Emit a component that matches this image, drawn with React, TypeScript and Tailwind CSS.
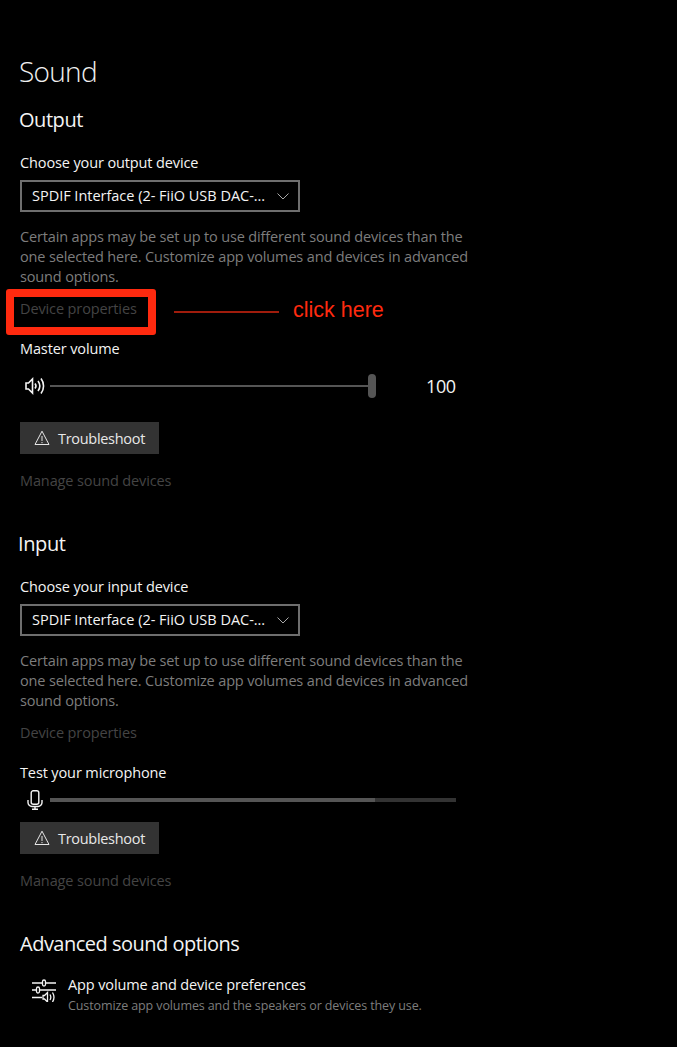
const font = { fontFamily: '"Open Sans", sans-serif' };

function Warning() {
  return (
    <svg width="16" height="16" viewBox="0 0 16 16" fill="none" stroke="#e6e6e6" strokeWidth="1">
      <path d="M8 1.200 15 14.500H1L8 1.200Z" />
      <path d="M8 6v5M8 12v1.200" />
    </svg>
  );
}

function Troubleshoot() {
  return (
    <button className="flex h-8 w-[139px] items-center bg-[#333333] pl-[14px] text-[14.5px] tracking-[-0.3px] text-[#e8e8e8]">
      <Warning />
      <span className="ml-2 pt-[2px]">Troubleshoot</span>
    </button>
  );
}

function DeviceSelect() {
  return (
    <div className="mt-[7px] flex h-8 w-[280px] items-center justify-between border-2 border-[#6e6e6e] pl-[10px] pr-[9px] text-[14.5px] tracking-[-0.02px] text-[#f4f4f4]">
      <span>SPDIF Interface (2- FiiO USB DAC-...</span>
      <svg width="12" height="7" viewBox="0 0 12 7" fill="none" stroke="#a8a8a8" strokeWidth="1">
        <path d="M.5.5 6 6 11.500.5" />
      </svg>
    </div>
  );
}

function Description() {
  return (
    <p className="mt-[15px] w-[460px] text-[14.5px] leading-5 tracking-[-0.15px] text-[#7d7d7d]">
      Certain apps may be set up to use different sound devices than the
      <br />
      one selected here. Customize app volumes and devices in advanced
      <br />
      sound options.
    </p>
  );
}

function Label({ text, className }: { text: string; className: string }) {
  return <div className={`h-5 text-[14.5px] leading-5 tracking-[-0.12px] ${className}`}>{text}</div>;
}

export default function App() {
  return (
    <div className="h-[1047px] w-[677px] overflow-hidden bg-black pl-5 pt-[52px] text-[#f4f4f4]" style={font}>
      <h1 className="-ml-px h-10 text-[28px] font-light leading-[38px] tracking-[-0.7px] text-[#f0f0f0]">Sound</h1>

      <h2 className="-ml-px mt-[14px] h-7 text-[20px] leading-7 tracking-[-0.45px]">Output</h2>
      <Label text="Choose your output device" className="mt-[19px]" />
      <DeviceSelect />
      <Description />

      <div className="relative mt-3">
        <Label text="Device properties" className="text-[#444444]" />
        <div className="absolute left-[-14px] top-[-10px] h-[46px] w-[150px] rounded-[3px] border-[8px] border-[#ff2a0f]" />
        <div className="absolute left-[154px] top-[12px] h-[2px] w-[105px] bg-[#a01c0c]" />
        <div
          className="absolute left-[273px] top-px text-[21.5px] leading-5 text-[#ff2a0f]"
          style={{ fontFamily: '"Liberation Sans", sans-serif' }}
        >
          click here
        </div>
      </div>

      <Label text="Master volume" className="mt-5" />
      <div className="mt-[15px] flex h-6 items-center">
        <svg className="ml-[5px]" width="20" height="18" viewBox="0 0 20 18" fill="none" stroke="#f4f4f4" strokeWidth="1.600">
          <path d="M1 6h2.500L7.500 2v14l-4-4H1V6Z" />
          <path d="M10 6.500c1.200 1.500 1.200 3.500 0 5M13 4c2.200 3 2.200 7 0 10M16 1.500c3.400 4.500 3.400 10.500 0 15" />
        </svg>
        <div className="ml-[5px] mb-px h-[2px] w-[318px] bg-[#555555]" />
        <div className="h-6 w-2 rounded-full bg-[#555555]" />
        <div className="ml-[50px] text-[18px] tracking-[-0.4px]">100</div>
      </div>

      <div className="mt-6">
        <Troubleshoot />
      </div>
      <Label text="Manage sound devices" className="mt-[17px] text-[#444444]" />

      <h2 className="-ml-[2px] mt-[39px] h-7 text-[20px] leading-7 tracking-[-0.4px]">Input</h2>
      <Label text="Choose your input device" className="mt-[19px]" />
      <DeviceSelect />
      <Description />
      <Label text="Device properties" className="mt-3 text-[#444444]" />

      <Label text="Test your microphone" className="mt-5" />
      <div className="mt-[7px] flex h-5 items-center">
        <svg className="ml-[7px]" width="16" height="20" viewBox="0 0 16 20" fill="none" stroke="#f4f4f4" strokeWidth="1.400">
          <rect x="4.200" y="0.800" width="7.600" height="13.400" rx="2" />
          <path d="M1 10v2.500C1 14.500 2.800 16.500 5 16.500h6c2.200 0 4-2 4-4V10M8 16.500v2.500M5 19.200h6" />
        </svg>
        <div className="ml-[7px] flex h-1 w-[406px]">
          <div className="h-1 w-[325px] bg-[#555555]" />
          <div className="h-1 flex-1 bg-[#333333]" />
        </div>
      </div>

      <div className="mt-3">
        <Troubleshoot />
      </div>
      <Label text="Manage sound devices" className="mt-[17px] text-[#444444]" />

      <h2 className="mt-[39px] h-7 text-[20px] leading-7 tracking-[-0.5px]">Advanced sound options</h2>
      <div className="mt-[17px] flex">
        <svg className="ml-3 mt-[3px]" width="24" height="24" viewBox="0 0 24 24" fill="none" stroke="#f4f4f4" strokeWidth="1.300">
          <path d="M0 5h10.500M13.500 5H24M0 12h4.500M7.500 12H24M0 19.500h10" />
          <rect x="10.500" y="2" width="3" height="6" rx="1.500" />
          <rect x="4.500" y="9" width="3" height="6" rx="1.500" />
          <path d="M11 17.500h1.500l3-3v9.500l-3-3H11v-3.500ZM18 16.500c1 1.700 1 3.800 0 5.500M20.500 14.500c1.800 2.900 1.800 6.600 0 9.500" />
        </svg>
        <div className="ml-3">
          <Label text="App volume and device preferences" />
          <div className="mt-px text-[12.5px] leading-5 tracking-[-0.11px] text-[#7d7d7d]">
            Customize app volumes and the speakers or devices they use.
          </div>
        </div>
      </div>
    </div>
  );
}
